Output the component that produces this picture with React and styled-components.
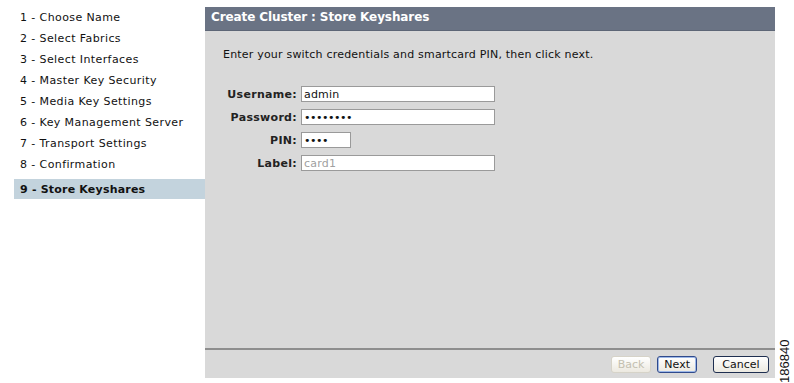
import React from "react";
import styled, { createGlobalStyle } from "styled-components";

const Global = createGlobalStyle`
  html, body { margin: 0; padding: 0; background: #ffffff; }
  body { font-family: "DejaVu Sans", Verdana, sans-serif; color: #000; }
`;

const Page = styled.div`
  display: flex;
  align-items: flex-start;
  width: 794px;
  height: 383px;
  overflow: hidden;
`;

const Sidebar = styled.nav`
  width: 191px;
  padding: 7px 0 0 14px;
  display: flex;
  flex-direction: column;
`;

const Step = styled.div`
  height: ${(p) => (p.$active ? "20px" : "21px")};
  margin-top: ${(p) => (p.$active ? "4px" : "0")};
  line-height: ${(p) => (p.$active ? "21px" : "21px")};
  padding-left: 6px;
  font-size: 11px;
  letter-spacing: ${(p) => (p.$active ? "0.2px" : "0.4px")};
  font-weight: ${(p) => (p.$active ? "bold" : "normal")};
  background: ${(p) => (p.$active ? "#c3d3dd" : "transparent")};
  color: #111;
  white-space: nowrap;
`;

const Panel = styled.section`
  margin-top: 7px;
  width: 570px;
  height: 371px;
  display: flex;
  flex-direction: column;
  background: #d9d9d9;
`;

const Header = styled.header`
  height: 24px;
  line-height: 20px;
  background: #6a7384;
  color: #fff;
  font-weight: bold;
  font-size: 12px;
  letter-spacing: -0.1px;
  padding-left: 6px;
  border-bottom: 1px solid #5d6676;
  box-sizing: border-box;
`;

const Content = styled.div`
  flex: 1;
  padding: 17px 0 0 18px;
`;

const Intro = styled.p`
  margin: 0 0 24px 0;
  font-size: 11px;
  line-height: 14px;
  letter-spacing: 0.2px;
  color: #111;
`;

const Form = styled.div`
  display: grid;
  grid-template-columns: 74px auto;
  column-gap: 4px;
  row-gap: 7px;
  align-items: center;
  justify-items: start;
`;

const Label = styled.label`
  justify-self: end;
  font-size: 11px;
  font-weight: bold;
  letter-spacing: 0.3px;
  color: #222;
`;

const Field = styled.input`
  box-sizing: border-box;
  height: 16px;
  width: ${(p) => p.$w}px;
  margin: 0;
  padding: 0 2px;
  border: 1px solid #9a9a9a;
  background: #fff;
  font-family: "DejaVu Sans", Verdana, sans-serif;
  font-size: 11px;
  letter-spacing: ${(p) => (p.type === "password" ? "-0.5px" : "0.2px")};
  color: ${(p) => (p.disabled ? "#a0a0a0" : "#111")};
  outline: none;
  &:disabled { background: #fff; }
`;

const Footer = styled.footer`
  height: 30px;
  border-top: 2px solid #8e8e8e;
  box-sizing: border-box;
  display: flex;
  align-items: center;
  justify-content: flex-end;
  padding-right: 6px;
  gap: 6px;
`;

const Button = styled.button`
  box-sizing: border-box;
  height: 17px;
  min-width: ${(p) => p.$w}px;
  margin-left: ${(p) => p.$gap || 0}px;
  padding: 0 6px;
  font-family: "DejaVu Sans", Verdana, sans-serif;
  font-size: 11px;
  line-height: 13px;
  color: ${(p) => (p.disabled ? "#c4c0b0" : "#111")};
  background: linear-gradient(#ffffff, #ece9e0);
  border: 1px solid ${(p) => (p.disabled ? "#d6d3c8" : p.$focus ? "#2f4a8c" : "#1f2f50")};
  border-radius: 3px;
  box-shadow: ${(p) => (p.$focus ? "inset 0 0 0 1px #9db8e8" : "none")};
`;

const Side = styled.div`
  align-self: flex-end;
  width: 19px;
  height: 45px;
  display: flex;
  justify-content: center;
`;

const Code = styled.span`
  writing-mode: vertical-rl;
  transform: rotate(180deg);
  font-family: "Liberation Sans", Arial, sans-serif;
  font-size: 13px;
  line-height: 14px;
  color: #111;
`;

const steps = [
  "1 - Choose Name",
  "2 - Select Fabrics",
  "3 - Select Interfaces",
  "4 - Master Key Security",
  "5 - Media Key Settings",
  "6 - Key Management Server",
  "7 - Transport Settings",
  "8 - Confirmation",
];

export default function App() {
  return (
    <Page>
      <Global />
      <Sidebar>
        {steps.map((s) => (
          <Step key={s}>{s}</Step>
        ))}
        <Step $active>9 - Store Keyshares</Step>
      </Sidebar>
      <Panel>
        <Header>Create Cluster : Store Keyshares</Header>
        <Content>
          <Intro>Enter your switch credentials and smartcard PIN, then click next.</Intro>
          <Form>
            <Label>Username:</Label>
            <Field $w={194} defaultValue="admin" />
            <Label>Password:</Label>
            <Field $w={194} type="password" defaultValue="password" />
            <Label>PIN:</Label>
            <Field $w={50} type="password" defaultValue="1234" />
            <Label>Label:</Label>
            <Field $w={194} disabled defaultValue="card1" />
          </Form>
        </Content>
        <Footer>
          <Button $w={40} disabled>Back</Button>
          <Button $w={39} $focus>Next</Button>
          <Button $w={56} $gap={10}>Cancel</Button>
        </Footer>
      </Panel>
      <Side>
        <Code>186840</Code>
      </Side>
    </Page>
  );
}
